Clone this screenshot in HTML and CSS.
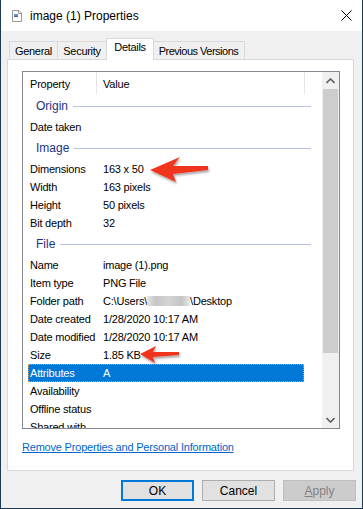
FILE: index.html
```html
<!DOCTYPE html>
<html>
<head>
    <title>image (1) Properties</title>
    <link rel="stylesheet" href="styles.css">
</head>
<body>
<div class="window">
    <div class="titlebar">
        <svg class="file-icon" width="12" height="12" viewBox="0 0 12 12">
            <path d="M1.5 0.5h6.5l2.5 2.5v8.5h-9z" fill="#fff" stroke="#9a9a9a"/>
            <path d="M7.5 0.5v3h3" fill="none" stroke="#9a9a9a"/>
            <rect x="3" y="4" width="4" height="3" fill="#6a8cc0"/>
            <rect x="3" y="6" width="4" height="1" fill="#3d6aa8"/>
        </svg>
        <span class="title">image (1) Properties</span>
        <svg class="close" width="11" height="11" viewBox="0 0 11 11">
            <path d="M0.5 0.5l10 10M10.5 0.5l-10 10" stroke="#000" stroke-width="1"/>
        </svg>
    </div>

    <div class="dialog">
        <div class="tabs">
            <div class="tab tab-general">General</div>
            <div class="tab tab-security">Security</div>
            <div class="tab tab-details active">Details</div>
            <div class="tab tab-versions">Previous Versions</div>
        </div>

        <div class="panel">
            <div class="listbox">
                <div class="list">
                    <div class="list-header">
                        <div class="name">Property</div>
                        <div class="value">Value</div>
                    </div>

                    <div class="group">Origin</div>
                    <div class="row"><div class="name">Date taken</div><div class="value"></div></div>

                    <div class="group">Image</div>
                    <div class="row"><div class="name">Dimensions</div><div class="value">163 x 50</div></div>
                    <div class="row"><div class="name">Width</div><div class="value">163 pixels</div></div>
                    <div class="row"><div class="name">Height</div><div class="value">50 pixels</div></div>
                    <div class="row"><div class="name">Bit depth</div><div class="value">32</div></div>

                    <div class="group">File</div>
                    <div class="row"><div class="name">Name</div><div class="value">image (1).png</div></div>
                    <div class="row"><div class="name">Item type</div><div class="value">PNG File</div></div>
                    <div class="row"><div class="name">Folder path</div><div class="value">C:\Users\<span class="blur"></span>\Desktop</div></div>
                    <div class="row"><div class="name">Date created</div><div class="value">1/28/2020 10:17 AM</div></div>
                    <div class="row"><div class="name">Date modified</div><div class="value">1/28/2020 10:17 AM</div></div>
                    <div class="row"><div class="name">Size</div><div class="value">1.85 KB</div></div>
                    <div class="row selected"><div class="name">Attributes</div><div class="value">A</div></div>
                    <div class="row"><div class="name">Availability</div><div class="value"></div></div>
                    <div class="row"><div class="name">Offline status</div><div class="value"></div></div>
                    <div class="row"><div class="name">Shared with</div><div class="value"></div></div>
                </div>

                <div class="scrollbar">
                    <div class="sb-button">
                        <svg width="9" height="6" viewBox="0 0 9 6"><path d="M0.5 5l4-4 4 4" fill="none" stroke="#606060" stroke-width="1.6"/></svg>
                    </div>
                    <div class="sb-thumb"></div>
                    <div class="sb-track"></div>
                    <div class="sb-button">
                        <svg width="9" height="6" viewBox="0 0 9 6"><path d="M0.5 1l4 4 4-4" fill="none" stroke="#606060" stroke-width="1.6"/></svg>
                    </div>
                </div>
            </div>

            <a class="link" href="#">Remove Properties and Personal Information</a>
        </div>

        <div class="buttons">
            <button class="btn default">OK</button>
            <button class="btn">Cancel</button>
            <button class="btn disabled"><u>A</u>pply</button>
        </div>
    </div>

    <!-- annotation arrows drawn over the screenshot -->
    <svg class="arrows" width="363" height="509" viewBox="0 0 363 509">
        <defs>
            <filter id="shadow" x="-20%" y="-40%" width="140%" height="180%">
                <feDropShadow dx="1" dy="2" stdDeviation="1.2" flood-color="#000" flood-opacity="0.35"/>
            </filter>
        </defs>
        <polygon filter="url(#shadow)" fill="#f0361c"
                 points="150,170 180,157 173,166 208,166 208,170 173,174 176,182"/>
        <polygon filter="url(#shadow)" fill="#f0361c"
                 points="140,354 156,346 153,352 179,352 179,355 153,357 155,363"/>
    </svg>
</div>
</body>
</html>
```

FILE: styles.css
```css
body {
    margin: 0;
    font-family: "Liberation Sans", Arial, sans-serif;
    font-size: 11px;
    letter-spacing: -0.2px;
    color: #000;
    background: #1c3a56;
}
.window {
    position: relative;
    width: 363px;
    height: 509px;
    box-sizing: border-box;
    border: 1px solid #1c3a56;
    border-top: none;
    background: #f0f0f0;
    display: flex;
    flex-direction: column;
}
.titlebar {
    height: 31px;
    flex-shrink: 0;
    background: #fff;
    display: flex;
    align-items: center;
    padding: 0 10px;
}
.title {
    font-size: 12px;
    letter-spacing: 0;
    margin-left: 7px;
}
.close {
    margin-left: auto;
}

.dialog {
    flex: 1;
    padding: 7px 8px 0 6px;
}
.tabs {
    display: flex;
    height: 21px;
    padding-left: 2px;
}
.tab {
    margin-top: 3px;
    height: 18px;
    line-height: 18px;
    box-sizing: border-box;
    text-align: center;
    white-space: nowrap;
    border: 1px solid #d9d9d9;
    border-bottom: none;
    background: #f0f0f0;
    letter-spacing: -0.3px;
}
.tab + .tab {
    margin-left: -1px;
}
.tab-general { width: 49px; }
.tab-security { width: 50px; }
.tab-details { width: 48px; }
.tab-versions { width: 93px; letter-spacing: -0.5px; }
.tab.active {
    position: relative;
    z-index: 1;
    margin-top: 0;
    margin-right: -1px;
    height: 22px;
    line-height: 17px;
    background: #fff;
}

.panel {
    height: 412px;
    box-sizing: border-box;
    border: 1px solid #d9d9d9;
    background: #fff;
    padding: 11px 0 0 14px;
}
.listbox {
    width: 318px;
    height: 358px;
    box-sizing: border-box;
    border: 1px solid #828790;
    display: flex;
}
.list {
    flex: 1;
    overflow: hidden;
    padding-left: 5px;
}
.list-header {
    display: flex;
    height: 22px;
    line-height: 24px;
}
.list-header .name {
    width: 69px;
    box-sizing: border-box;
    padding-left: 2px;
    border-right: 1px solid #e5e5e5;
}
.list-header .value {
    width: 208px;
    box-sizing: border-box;
    padding-left: 6px;
    border-right: 1px solid #e5e5e5;
}
.group {
    display: flex;
    align-items: center;
    width: 283px;
    height: 24px;
    box-sizing: border-box;
    padding-left: 8px;
    color: #1e3287;
    font-size: 12px;
    letter-spacing: 0;
}
.group::after {
    content: "";
    flex: 1;
    height: 1px;
    margin-left: 5px;
    background: #b6c3e8;
}
.row {
    display: flex;
    width: 276px;
    height: 18px;
    line-height: 18px;
    white-space: nowrap;
}
.row .name {
    width: 69px;
    flex-shrink: 0;
    box-sizing: border-box;
    padding-left: 2px;
}
.row .value {
    padding-left: 6px;
}
.row.selected {
    background: #0078d7;
    color: #fff;
    outline: 1px dotted #e89a50;
    outline-offset: -1px;
}
.blur {
    display: inline-block;
    width: 43px;
    height: 10px;
    vertical-align: -1px;
    background: linear-gradient(90deg, #e4e4e4, #c6c6c6 20%, #d4d4d4 50%, #c4c4c4 80%, #e8e8e8);
}

.scrollbar {
    width: 17px;
    flex-shrink: 0;
    background: #f0f0f0;
    display: flex;
    flex-direction: column;
}
.sb-button {
    height: 17px;
    display: flex;
    align-items: center;
    justify-content: center;
}
.sb-thumb {
    height: 264px;
    margin: 0 1px;
    background: #cdcdcd;
}
.sb-track {
    flex: 1;
}

.link {
    display: inline-block;
    margin-top: 11px;
    line-height: 14px;
    color: #0066cc;
    text-decoration: underline;
}

.buttons {
    display: flex;
    justify-content: flex-end;
    gap: 8px;
    margin-top: 9px;
    margin-right: -2px;
}
.btn {
    width: 73px;
    height: 21px;
    padding: 0;
    font-family: inherit;
    font-size: 12px;
    color: #000;
    background: #e1e1e1;
    border: 1px solid #adadad;
}
.btn.default {
    border: 2px solid #0078d7;
}
.btn.disabled {
    color: #838383;
    background: #cccccc;
    border-color: #bfbfbf;
}
.btn u {
    text-decoration: underline;
}

.arrows {
    position: absolute;
    left: -1px;
    top: 0;
    pointer-events: none;
}
```
